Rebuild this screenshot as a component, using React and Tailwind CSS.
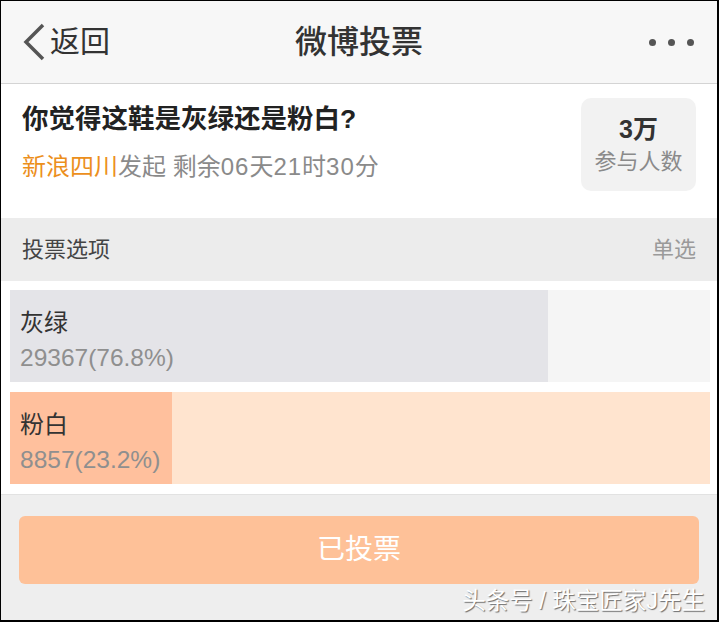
import React from 'react';

const font = { fontFamily: '"Liberation Sans", "Noto Sans CJK SC", sans-serif' };

const options = [
  { label: '灰绿', count: '29367(76.8%)', pct: 76.8, track: 'bg-[#f5f5f5]', fill: 'bg-[#e4e4e8]' },
  { label: '粉白', count: '8857(23.2%)', pct: 23.2, track: 'bg-[#ffe4cf]', fill: 'bg-[#ffc09d]' },
];

const Option = ({ label, count, pct, track, fill }) => (
  <div className={`relative h-[92px] ${track}`}>
    <div className={`absolute inset-y-0 left-0 ${fill}`} style={{ width: `${pct}%` }} />
    <div className="relative flex h-full flex-col justify-center pl-[10px] pt-[10px]">
      <span className="text-[24px] leading-[34px] text-[#333]">{label}</span>
      <span className="text-[24.5px] leading-[36px] text-[#8f8f8f]">{count}</span>
    </div>
  </div>
);

const App = () => {
  return (
    <div
      className="w-[719px] h-[622px] overflow-hidden border-t border-l border-r-2 border-b-2 border-black bg-[#eeeeee] flex flex-col"
      style={font}
    >
      {/* NAV */}
      <div className="h-[83px] shrink-0 bg-[#f7f7f7] border-b border-[#d4d4d4] flex items-center px-[21px]">
        <div className="flex items-center w-[160px]">
          <svg width="24" height="38" viewBox="0 0 24 38" className="mr-[4px]">
            <polyline points="21,2 4,19 21,36" fill="none" stroke="#555" strokeWidth="3.5" strokeLinejoin="miter" />
          </svg>
          <span className="text-[30px] text-[#333] leading-none">返回</span>
        </div>
        <div className="flex-1 text-center text-[32px] font-medium text-[#333] leading-none">微博投票</div>
        <div className="w-[160px] flex justify-end gap-[12px] pr-[2px]">
          <span className="w-[7px] h-[7px] rounded-full bg-[#555]" />
          <span className="w-[7px] h-[7px] rounded-full bg-[#555]" />
          <span className="w-[7px] h-[7px] rounded-full bg-[#555]" />
        </div>
      </div>

      {/* QUESTION */}
      <div className="h-[134px] shrink-0 bg-white flex justify-between pl-[21px] pr-[21px] pt-[14px]">
        <div className="flex flex-col">
          <span className="text-[26.5px] font-bold text-[#222] leading-[38px] mt-[2px]">你觉得这鞋是灰绿还是粉白?</span>
          <span className="text-[24px] leading-[34px] mt-[12px] text-[#8a8a8a]">
            <span className="text-[#ec8f1c]">新浪四川</span>发起 剩余<span className="tracking-[1px]">06</span>天<span className="tracking-[1px]">21</span>时<span className="tracking-[1px]">30</span>分
          </span>
        </div>
        <div className="w-[115px] h-[93px] rounded-[10px] bg-[#f2f2f2] flex flex-col items-center justify-center">
          <span className="text-[25px] font-bold text-[#333] leading-[34px]">3万</span>
          <span className="text-[22px] text-[#8a8a8a] leading-[32px]">参与人数</span>
        </div>
      </div>

      {/* HEADER */}
      <div className="h-[63px] shrink-0 bg-[#ececec] flex items-center justify-between px-[21px]">
        <span className="text-[22px] text-[#444]">投票选项</span>
        <span className="text-[22px] text-[#9a9a9a]">单选</span>
      </div>

      {/* OPTIONS */}
      <div className="shrink-0 bg-white pl-[9px] pr-[7px] pt-[9px] pb-[10px] flex flex-col gap-[10px] border-b border-[#e2e2e2]">
        {options.map((o) => (
          <Option key={o.label} {...o} />
        ))}
      </div>

      {/* FOOTER */}
      <div className="flex-1 px-[18px] pt-[21px] flex flex-col">
        <div className="h-[68px] rounded-[6px] bg-[#fec198] flex items-center justify-center text-[28px] text-white">
          已投票
        </div>
        <div className="flex justify-end -mr-[6px]">
          <span className="text-[23.5px] leading-[34px] text-white [text-shadow:1px_1px_1px_rgba(0,0,0,0.55)]">
            头条号 / 珠宝匠家J先生
          </span>
        </div>
      </div>
    </div>
  );
};

export default App;
